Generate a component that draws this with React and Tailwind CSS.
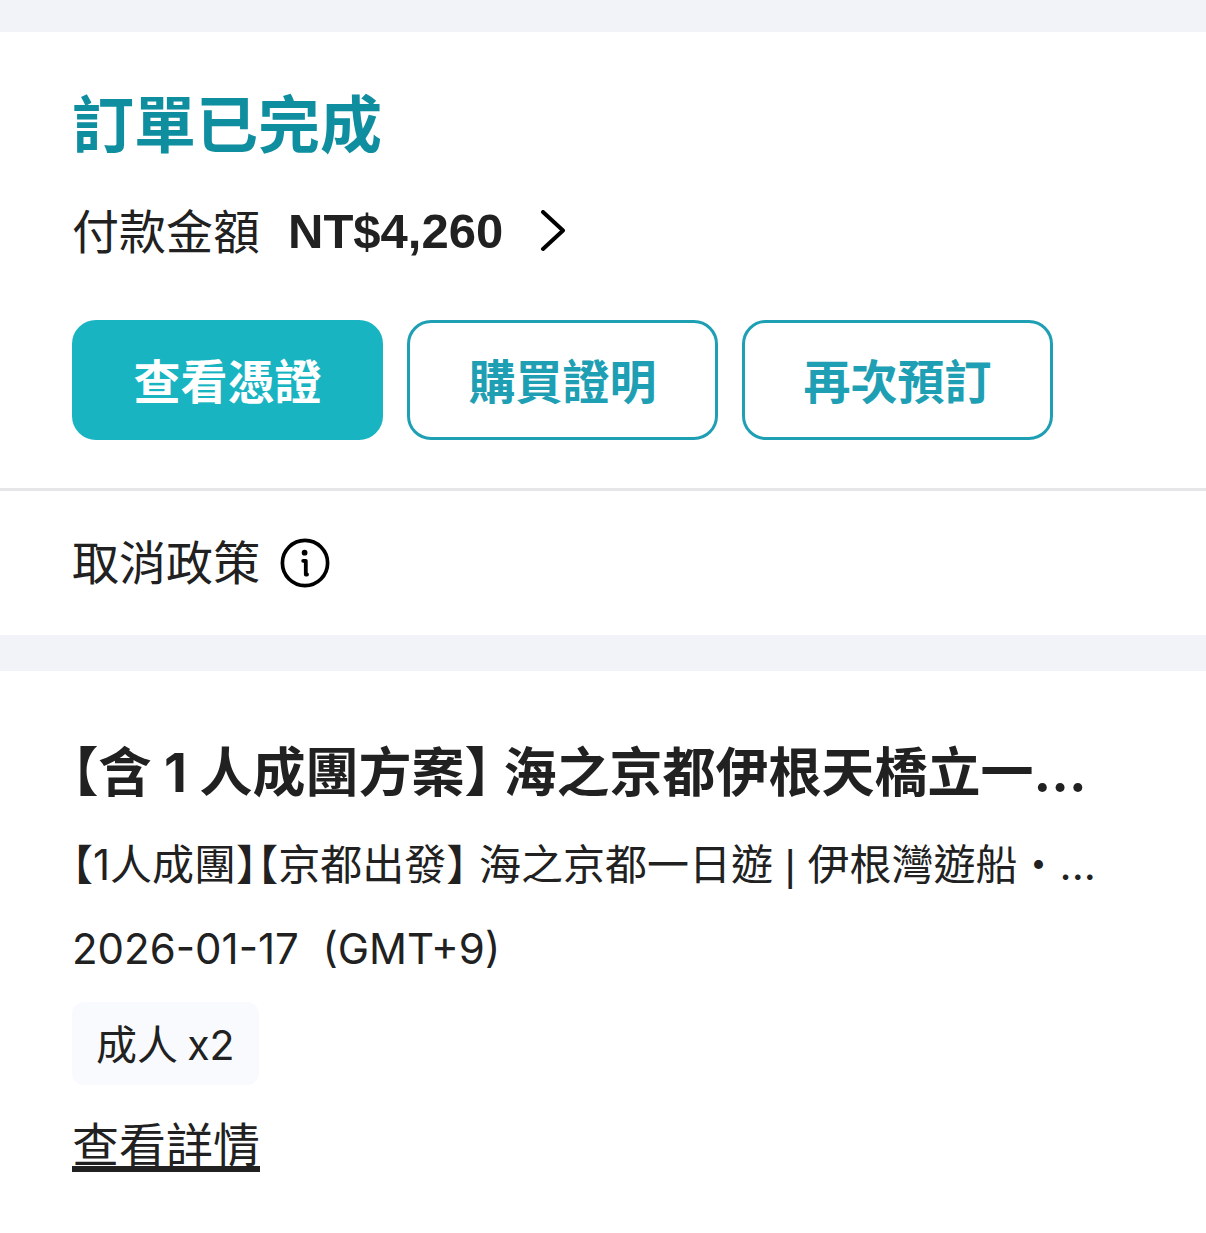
import React from 'react';

const actions = [
  { label: '查看憑證', className: 'bg-[#18b4c1] border-[#18b4c1] text-white' },
  { label: '購買證明', className: 'bg-white border-[#1f9fb3] text-[#1f9fb3]' },
  { label: '再次預訂', className: 'bg-white border-[#1f9fb3] text-[#1f9fb3]' },
];

const ChevronIcon = () => (
  <svg className="w-7 h-11" viewBox="0 0 28 44" fill="none" stroke="currentColor" strokeWidth="4" strokeLinecap="round" strokeLinejoin="round" aria-hidden="true">
    <path d="M4 2 L24 20.5 L4 39" />
  </svg>
);

const InfoIcon = () => (
  <svg className="size-[50px] text-black" viewBox="0 0 50 50" fill="none" aria-hidden="true">
    <circle cx="25" cy="25" r="22.6" stroke="currentColor" strokeWidth="3.7" />
    <circle cx="24.6" cy="14.7" r="2.9" fill="currentColor" />
    <path d="M23.2 22.8h2.6v13.7h1.2" stroke="currentColor" strokeWidth="3.8" strokeLinecap="round" strokeLinejoin="round" />
  </svg>
);

// Half-width 【】 so titles line up with the rest of the column
const Bracketed = ({ children }) => (
  <>
    <span className="[font-feature-settings:'halt']">【</span>
    {children}
    <span className="[font-feature-settings:'halt']">】</span>
  </>
);

const OrderStatus = () => (
  <section className="bg-white">
    <div className="px-18 pt-13 pb-12">
      <h1 className="text-[62px] leading-[84px] font-bold text-[#0f8ea0]">訂單已完成</h1>
      <button type="button" className="mt-4 flex items-center h-24 text-[47px]">
        <span>付款金額</span>
        <strong className="ml-7 font-['Liberation_Sans'] text-[49px] font-bold">NT$4,260</strong>
        <span className="ml-9 text-black"><ChevronIcon /></span>
      </button>
      <div className="mt-10 flex gap-6">
        {actions.map((action) => (
          <button
            key={action.label}
            type="button"
            className={`w-[311px] h-30 pt-1 rounded-3xl border-3 text-[47px] font-bold ${action.className}`}
          >
            {action.label}
          </button>
        ))}
      </div>
    </div>
    <div className="border-t-3 border-[#e6e6e8] px-18 h-[147px] flex items-center">
      <button type="button" className="flex items-center gap-5 text-[47px]">
        <span>取消政策</span>
        <InfoIcon />
      </button>
    </div>
  </section>
);

const OrderItem = () => (
  <section className="flex-1 bg-white px-18 pt-16 pb-12">
    <h2 className="text-[53px] leading-[76px] font-bold whitespace-nowrap">
      <Bracketed>含 1 人成團方案</Bracketed> 海之京都伊根天橋立一...
    </h2>
    <p className="mt-4 text-[42px] leading-[76px] whitespace-nowrap">
      <Bracketed>1人成團</Bracketed><Bracketed>京都出發</Bracketed> 海之京都一日遊{' '}
      <span className="font-['Liberation_Sans']">|</span> 伊根灣遊船・...
    </p>
    <p className="mt-2 text-[42px] leading-[74px]">2026-01-17&nbsp; (GMT+9)</p>
    <div className="mt-4 w-fit px-6 rounded-xl bg-[#f8fafd] text-[41px] leading-[80px] font-['Noto_Sans_CJK_TC']">
      成人 <span className="font-['Inter']">x2</span>
    </div>
    <a
      href="#details"
      className="mt-6 inline-block text-[47px] leading-[72px] underline decoration-[6px] underline-offset-4 [text-decoration-skip-ink:none]"
    >
      查看詳情
    </a>
  </section>
);

const App = () => (
  <main className="min-h-screen bg-[#f2f3f8] pt-8 flex flex-col gap-9 text-[#212121] font-['Inter','Noto_Sans_CJK_TC',sans-serif]">
    <OrderStatus />
    <OrderItem />
  </main>
);

export default App;
